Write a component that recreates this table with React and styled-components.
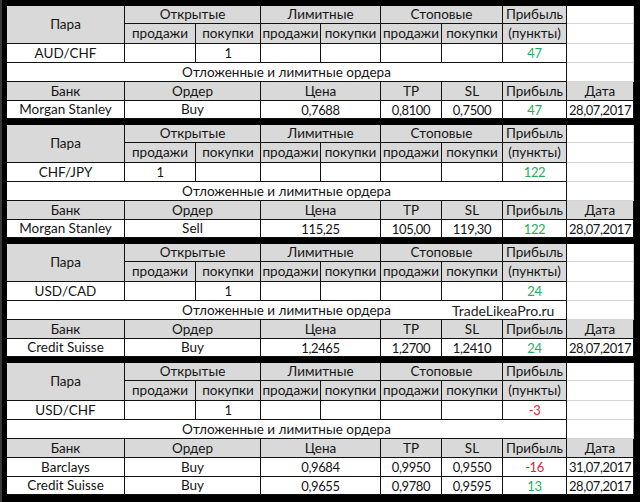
import React from 'react';
import styled, { createGlobalStyle } from 'styled-components';

const GREEN = '#1fae5b';
const RED = '#e3262b';

const Global = createGlobalStyle`
  html, body {
    margin: 0;
    background: #000;
  }
  body {
    font-family: Lato, "Open Sans", sans-serif;
  }
`;

const Sheet = styled.div`
  display: flex;
  flex-direction: column;
  gap: 6px;
  width: 640px;
  height: 502px;
  box-sizing: border-box;
  padding: 6px 0 0 5px;
  border-left: 2px solid #3a3a3a;
  overflow: hidden;
`;

const Block = styled.div`
  position: relative;
  display: grid;
  grid-template-columns: 118px 71px 65px 60px 60px 61px 61px 64px 67px;
  grid-template-rows: ${(p) => p.$rows};
  width: 627px;
`;

const Cell = styled.div`
  box-sizing: border-box;
  display: flex;
  align-items: center;
  justify-content: center;
  grid-column: span ${(p) => p.$span || 1};
  grid-row: span ${(p) => p.$rowSpan || 1};
  font-size: ${(p) => (p.$num ? '13px' : '13.5px')};
  letter-spacing: ${(p) => (p.$num ? '-0.4px' : '0')};
  line-height: 1;
  padding-top: 1px;
  white-space: nowrap;
  color: ${(p) => p.$color || '#151515'};
  background: ${(p) => (p.$head ? '#d9d9d9' : '#fff')};
  border-right: 1px solid ${(p) => (p.$blank ? '#d4d4d4' : '#111')};
  border-bottom: 1px solid ${(p) => (p.$blank ? '#d4d4d4' : '#111')};
`;

const Watermark = styled.div`
  position: absolute;
  left: 445px;
  top: 58px;
  font-size: 14px;
  color: #222;
  font-family: Lato, "Open Sans", sans-serif;
`;

const profitColor = (v) => (String(v).startsWith('-') ? RED : GREEN);

const blocks = [
  {
    pair: 'AUD/CHF',
    open: ['', '1'],
    profit: '47',
    orders: [['Morgan Stanley', 'Buy', '0,7688', '0,8100', '0,7500', '47', '28,07,2017']],
  },
  {
    pair: 'CHF/JPY',
    open: ['1', ''],
    profit: '122',
    orders: [['Morgan Stanley', 'Sell', '115,25', '105,00', '119,30', '122', '28,07,2017']],
  },
  {
    pair: 'USD/CAD',
    open: ['', '1'],
    profit: '24',
    mark: true,
    orders: [['Credit Suisse', 'Buy', '1,2465', '1,2700', '1,2410', '24', '28,07,2017']],
  },
  {
    pair: 'USD/CHF',
    open: ['', '1'],
    profit: '-3',
    orders: [
      ['Barclays', 'Buy', '0,9684', '0,9950', '0,9550', '-16', '31,07,2017'],
      ['Credit Suisse', 'Buy', '0,9655', '0,9780', '0,9595', '13', '28,07,2017'],
    ],
  },
];

const PairBlock = ({ data }) => {
  const last = data.orders.length - 1;
  const rows = ['18px', '20px', '19px', '19px', '19px', ...data.orders.map((_, i) => (i === last ? '18px' : '19px'))].join(' ');
  return (
    <Block $rows={rows}>
      <Cell $head $rowSpan={2}>Пара</Cell>
      <Cell $head $span={2}>Открытые</Cell>
      <Cell $head $span={2}>Лимитные</Cell>
      <Cell $head $span={2}>Стоповые</Cell>
      <Cell $head>Прибыль</Cell>
      <Cell $blank />

      <Cell $head>продажи</Cell>
      <Cell $head>покупки</Cell>
      <Cell $head>продажи</Cell>
      <Cell $head>покупки</Cell>
      <Cell $head>продажи</Cell>
      <Cell $head>покупки</Cell>
      <Cell $head>(пункты)</Cell>
      <Cell $blank />

      <Cell>{data.pair}</Cell>
      <Cell $num>{data.open[0]}</Cell>
      <Cell $num>{data.open[1]}</Cell>
      <Cell />
      <Cell />
      <Cell />
      <Cell />
      <Cell $num $color={profitColor(data.profit)}>{data.profit}</Cell>
      <Cell $blank />

      <Cell $span={8}>Отложенные и лимитные ордера</Cell>
      <Cell $blank />

      <Cell $head>Банк</Cell>
      <Cell $head $span={2}>Ордер</Cell>
      <Cell $head $span={2}>Цена</Cell>
      <Cell $head>TP</Cell>
      <Cell $head>SL</Cell>
      <Cell $head>Прибыль</Cell>
      <Cell $head>Дата</Cell>

      {data.orders.map((o) => (
        <React.Fragment key={o[0] + o[6]}>
          <Cell>{o[0]}</Cell>
          <Cell $span={2}>{o[1]}</Cell>
          <Cell $num $span={2}>{o[2]}</Cell>
          <Cell $num>{o[3]}</Cell>
          <Cell $num>{o[4]}</Cell>
          <Cell $num $color={profitColor(o[5])}>{o[5]}</Cell>
          <Cell $num>{o[6]}</Cell>
        </React.Fragment>
      ))}

      {data.mark && <Watermark>TradeLikeaPro.ru</Watermark>}
    </Block>
  );
};

export default function App() {
  return (
    <>
      <Global />
      <Sheet>
        {blocks.map((b) => (
          <PairBlock key={b.pair} data={b} />
        ))}
      </Sheet>
    </>
  );
}
